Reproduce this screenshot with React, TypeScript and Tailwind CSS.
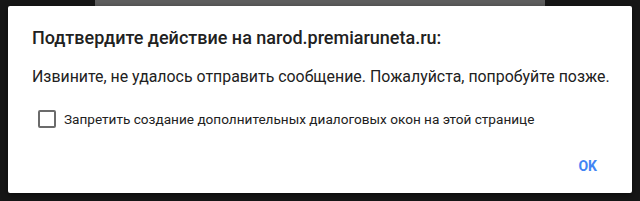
export default function App() {
  return (
    <div className="relative w-[640px] h-[201px] bg-[#161616] overflow-hidden" style={{ fontFamily: "Roboto, sans-serif" }}>
      <div className="absolute left-[95px] top-0 w-[450px] h-[8px] bg-[#5e5e5e]" />
      <div className="absolute left-[8px] top-[6px] w-[624px] h-[187px] bg-white rounded-[2px] shadow-[0_2px_6px_rgba(0,0,0,0.5)] flex flex-col">
        <div className="pl-[24px] pt-[20px] text-[18px] font-medium text-[#212121] leading-[24px]">
          Подтвердите действие на narod.premiaruneta.ru:
        </div>
        <div className="pl-[24px] pt-[16px] text-[15.9px] text-[#212121] leading-[22px]">
          Извините, не удалось отправить сообщение. Пожалуйста, попробуйте позже.
        </div>
        <label className="pl-[30px] pt-[21px] flex items-center gap-[8px] text-[13.6px] text-[#212121]">
          <span className="w-[18px] h-[18px] border-2 border-[#6b6b6b] rounded-[2px]" />
          <span>Запретить создание дополнительных диалоговых окон на этой странице</span>
        </label>
        <div className="flex justify-end pr-[35px] pt-[27px]">
          <span className="text-[14px] font-bold text-[#4285f4]">OK</span>
        </div>
      </div>
    </div>
  );
}
